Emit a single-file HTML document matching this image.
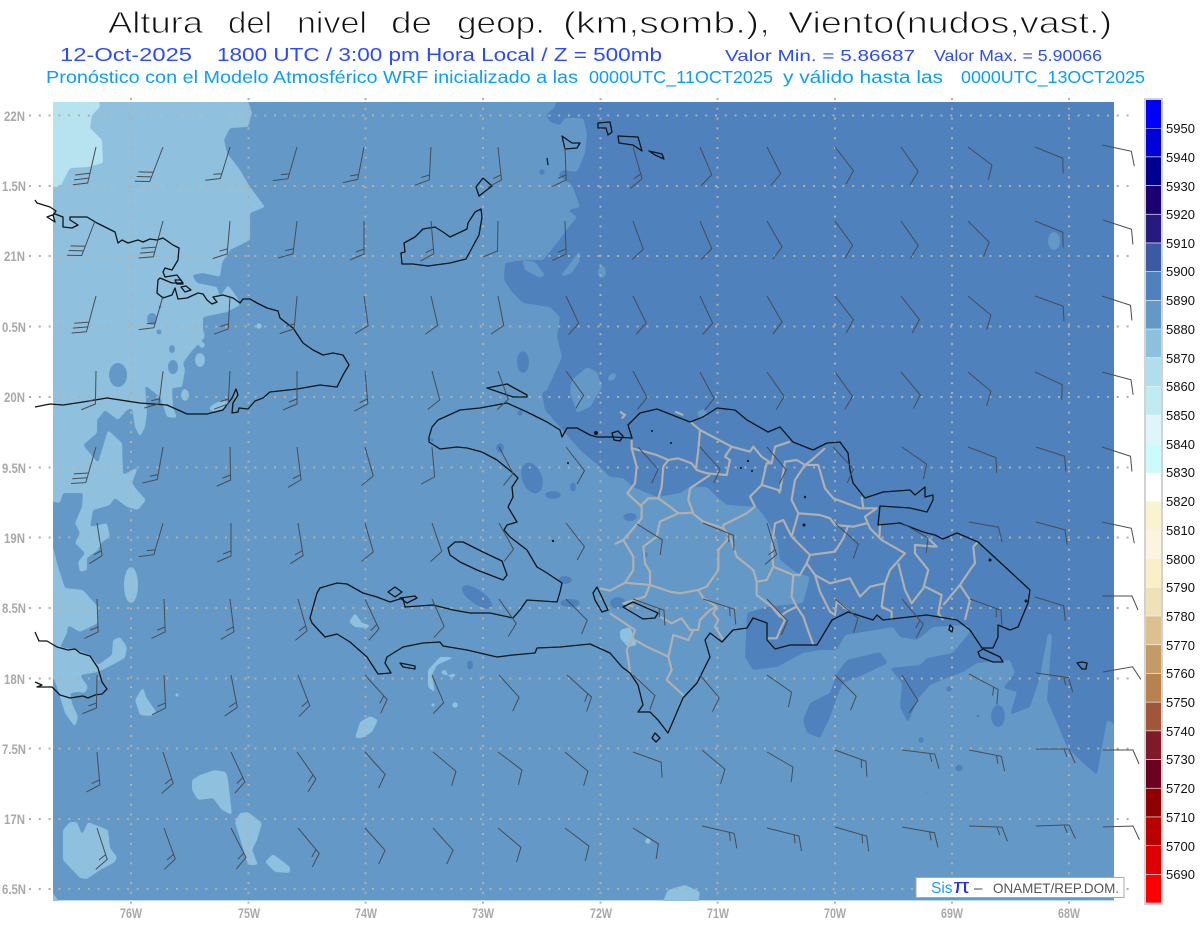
<!DOCTYPE html>
<html><head><meta charset="utf-8"><title>Altura del nivel de geop.</title>
<style>
html,body{margin:0;padding:0;background:#fff}
svg{display:block}
text{font-family:"Liberation Sans",sans-serif;white-space:pre}
.ax{font-size:14px;font-weight:bold;fill:#a9a9a9}
.cb{font-size:13px;fill:#111}
.cl{fill:none;stroke:#101418;stroke-width:1.3;stroke-linejoin:round}
.t1{font-size:31px;fill:#111;paint-order:fill stroke;stroke:#fff;stroke-width:.9px}
</style></head><body>
<svg width="1200" height="927" viewBox="0 0 1200 927" xmlns="http://www.w3.org/2000/svg">
<defs>
<g id="a" fill="none" stroke="#474c52" stroke-width="1"><path d="M0 0V37L-14 42M0 32L-14 37M0 27L-14 32"/></g>
<g id="b" fill="none" stroke="#474c52" stroke-width="1"><path d="M0 0V33L-14 39M0 28L-8 31"/></g>
<g id="c" fill="none" stroke="#474c52" stroke-width="1"><path d="M0 0V30L-14 36"/></g>
<clipPath id="m"><rect x="53" y="102" width="1061" height="799"/></clipPath>
<filter id="r" x="-5%" y="-5%" width="110%" height="110%" color-interpolation-filters="sRGB"><feGaussianBlur stdDeviation="1.2"/><feComponentTransfer><feFuncA type="linear" slope="5" intercept="-2"/></feComponentTransfer></filter>
<filter id="s" x="-5%" y="-5%" width="110%" height="110%"><feGaussianBlur stdDeviation=".35"/></filter>
</defs>
<rect width="1200" height="927" fill="#fff"/>

<g class="t1">
<text x="108" y="33" textLength="95" lengthAdjust="spacingAndGlyphs">Altura</text>
<text x="228" y="33" textLength="44" lengthAdjust="spacingAndGlyphs">del</text>
<text x="297" y="33" textLength="70" lengthAdjust="spacingAndGlyphs">nivel</text>
<text x="391" y="33" textLength="41" lengthAdjust="spacingAndGlyphs">de</text>
<text x="457" y="33" textLength="88" lengthAdjust="spacingAndGlyphs">geop.</text>
<text x="563" y="33" textLength="207" lengthAdjust="spacingAndGlyphs">(km,somb.),</text>
<text x="788" y="33" textLength="324" lengthAdjust="spacingAndGlyphs">Viento(nudos,vast.)</text>
</g>
<g font-size="18" fill="#2c4bff">
<text x="60" y="61" textLength="132" lengthAdjust="spacingAndGlyphs">12-Oct-2025</text>
<text x="217" y="61" textLength="445" lengthAdjust="spacingAndGlyphs">1800 UTC / 3:00 pm Hora Local / Z = 500mb</text>
</g>
<text x="725" y="61" font-size="16" fill="#2c4bff" textLength="190" lengthAdjust="spacingAndGlyphs">Valor Min. = 5.86687</text>
<text x="934" y="61" font-size="16" fill="#2c4bff" textLength="168" lengthAdjust="spacingAndGlyphs">Valor Max. = 5.90066</text>
<g font-size="17.5" fill="#0a9cff">
<text x="46" y="83" textLength="532" lengthAdjust="spacingAndGlyphs">Pronóstico con el Modelo Atmosférico WRF inicializado a las</text>
<text x="589" y="83" textLength="184" lengthAdjust="spacingAndGlyphs">0000UTC_11OCT2025</text>
<text x="783" y="83" textLength="160" lengthAdjust="spacingAndGlyphs">y válido hasta las</text>
<text x="961" y="83" textLength="184" lengthAdjust="spacingAndGlyphs">0000UTC_13OCT2025</text>
</g>

<g clip-path="url(#m)">
<rect x="53" y="102" width="1061" height="799" fill="#6499c7"/>
<rect x="53" y="900" width="1061" height="1" fill="#b8dcf0"/>
<!-- dark -->
<g fill="#4f81bd" filter="url(#r)">
<path d="M557 95L555 107L546 115L550 122L560 125L565 118L583 118L587 133L585 153L577 172L563 170L558 175L572 185L580 207L568 210L577 217L565 232L557 243L543 260L523 260L505 263L504 280L512 292L523 303L550 307L560 317L557 337L562 357L547 390L542 393L545 410L560 427L580 450L600 467L610 477L623 478L633 487L657 497L680 493L690 487L707 487L717 497L727 505L757 507L767 520L777 540L780 560L797 573L810 577L803 603L767 607L747 613L745 657L753 670L777 667L803 653L820 650L837 650L845 635L893 627L900 637L917 640L933 627L967 625L970 632L953 653L927 658L920 665L890 668L902 683L900 707L908 723L917 700L930 685L947 678L963 672L977 663L1010 660L1015 673L1003 688L1017 692L1010 715L1030 707L1040 677L1048 633L1052 635L1047 700L1057 723L1067 747L1083 763L1097 775L1107 720L1113 723L1122 743V95Z"/>
<path d="M880 652L888 663L863 675L843 683L837 697L830 717L820 738L807 733L803 720L810 703L830 693L837 673L847 660Z"/>
<ellipse cx="523" cy="362" rx="6" ry="11"/><circle cx="542" cy="172" r="3"/>
<ellipse cx="477" cy="597" rx="18" ry="7" transform="rotate(35 477 597)"/>
<ellipse cx="470" cy="665" rx="3" ry="5"/>
<ellipse cx="532" cy="478" rx="10" ry="16" transform="rotate(-20 532 478)"/>
<ellipse cx="553" cy="495" rx="8" ry="4"/><ellipse cx="573" cy="487" rx="3" ry="5"/>
<ellipse cx="565" cy="580" rx="7" ry="4"/><ellipse cx="570" cy="603" rx="10" ry="4"/>
<ellipse cx="500" cy="448" rx="4" ry="5"/><circle cx="520" cy="413" r="3"/>
<ellipse cx="630" cy="517" rx="7" ry="4"/><circle cx="645" cy="555" r="3"/>
<ellipse cx="618" cy="603" rx="8" ry="6"/><circle cx="432" cy="440" r="2"/>
<ellipse cx="998" cy="716" rx="7" ry="11"/><circle cx="921" cy="740" r="3"/>
<ellipse cx="959" cy="768" rx="4" ry="3.5"/><circle cx="949" cy="689" r="3"/>
<circle cx="978" cy="716" r="2"/><circle cx="927" cy="793" r="1.5"/>
</g>
<!-- mid on dark -->
<g fill="#6499c7" filter="url(#r)">
<path d="M587 367L597 372L602 387L590 407L577 413L570 393L572 380Z"/>
<path d="M560 277L580 250L580 260L572 273Z"/>
<ellipse cx="602" cy="272" rx="4" ry="6"/>
<ellipse cx="612" cy="377" rx="5" ry="3" transform="rotate(-40 612 377)"/>
<ellipse cx="1054" cy="241" rx="6" ry="9"/>
<path d="M522 260L535 262L545 275L540 278L525 270Z"/>
<path d="M697 412L705 408L708 416L700 420Z"/>
</g>
<!-- light -->
<g fill="#8fc1df" filter="url(#r)">
<path d="M45 95L246 95L252 113L248 127L230 128L224 140L227 153L240 170L250 187L265 207L250 213L250 240L230 250L222 263L220 277L203 273L192 275L197 283L217 287L220 297L228 285L237 297L240 305L227 312L203 317L203 330L205 337L200 342L190 353L183 363L185 370L182 387L172 388L173 407L177 418L167 417L160 397L145 385L147 413L145 427L140 437L135 427L132 408L127 410L118 420L105 410L97 420L97 433L83 445L98 463L108 430L122 443L123 475L138 467L132 483L137 490L146 500L138 510L127 507L115 498L113 500L110 505L93 510L90 527L107 523L110 537L102 542L98 550L87 558L87 570L80 572L78 562L85 553L75 543L80 533L75 523L82 507L83 493L63 493L60 503L45 500Z"/>
<path d="M45 547L53 547L58 567L65 588L83 590L98 607L98 623L80 632L68 625L67 633L60 647L77 650L90 655L98 665L112 655L113 640L120 637L127 647L125 658L112 665L98 672L80 675L88 687L85 693L78 692L70 693L72 703L78 717L75 727L65 713L57 687L53 677L45 677Z"/>
<circle cx="259" cy="326" r="3"/><circle cx="202" cy="345" r="3"/>
<ellipse cx="200" cy="360" rx="5" ry="7"/><circle cx="230" cy="351" r="1.5"/>
<ellipse cx="185" cy="395" rx="4" ry="6"/>
<ellipse cx="219" cy="406" rx="10" ry="4" transform="rotate(-20 219 406)"/>
<ellipse cx="131" cy="585" rx="7" ry="18"/>
<path d="M143 687L146 697L157 713L150 716L140 715L135 700Z"/>
<circle cx="177" cy="695" r="2"/>
<path d="M70 822L77 822L82 835L88 822L108 830L110 848L117 857L115 862L100 870L87 879L80 878L63 860L63 830Z"/>
<path d="M200 775L215 770L226 772L228 780L230 797L232 815L222 810L213 798L198 800L192 790L192 780Z"/>
<path d="M240 813L248 812L262 823L257 840L252 850L258 865L248 865L245 855L235 822Z"/>
<path d="M273 854L290 867L290 873L275 872L265 862Z"/>
<path d="M45 885L53 893L63 908H45Z"/>
<path d="M355 613L362 623L370 625L368 628L355 627L349 622Z"/>
<path d="M457 657L440 657L428 670L428 687L435 693L432 675L437 665L448 660Z"/>
<path d="M448 675L457 673L453 678L440 673L445 669Z"/>
<circle cx="455" cy="705" r="3"/><circle cx="433" cy="705" r="2"/>
<path d="M355 738L360 722L370 716L378 720L372 732L362 738Z"/>
<path d="M660 908L668 890L685 885L700 892L697 908Z"/>
<path d="M620 630L630 627L637 645L628 647L620 638Z"/>
<circle cx="648" cy="841" r="3"/>
</g>
<g fill="#6499c7"><ellipse cx="118" cy="375" rx="9" ry="12"/>
<ellipse cx="152" cy="319" rx="5" ry="6"/><ellipse cx="173" cy="367" rx="5" ry="7"/><ellipse cx="172" cy="349" rx="3" ry="4"/>
<circle cx="159" cy="332" r="2.5"/><circle cx="160" cy="307" r="1.5"/></g>
<g filter="url(#r)"><path d="M45 95L98 95L100 107L92 115L90 128L102 140L103 163L88 167L70 168L60 187L45 187Z" fill="#b7e2ef"/></g>
</g>

<!-- grid -->
<g fill="none" stroke="#b5aea5" stroke-width="2" stroke-dasharray="2 7.8">
<path d="M29 115.5H1135M29 186H1135M29 256H1135M29 326.5H1135M29 397H1135M29 467.5H1135M29 537.5H1135M29 608H1135M29 678.5H1135M29 748.5H1135M29 819H1135M29 889H1135"/>
<path d="M131 98V905M248.5 98V905M365.5 98V905M483 98V905M600.5 98V905M717.5 98V905M835 98V905M952 98V905M1069 98V905"/>
</g>

<!-- provinces -->
<g transform="translate(590 400) scale(.3333)" fill="none" stroke="#b0b0b0" stroke-width="6.5" stroke-linejoin="round" filter="url(#s)">
<path d="M125 120L125 145L140 200L135 250L112 280L155 320L155 355L130 385L100 420L75 432M100 420L130 470L130 510L105 548L60 572L30 565"/>
<path d="M105 548L180 555L240 575L270 580L325 570L340 595L380 620L370 640L385 660L375 680L400 720"/>
<path d="M180 555L165 590L100 610L130 620M210 650L245 670L275 655L300 690L325 690L330 660L360 630L380 620"/>
<path d="M60 640L135 690L125 720L110 750L118 800L120 820"/>
<path d="M135 720L170 740L235 770L245 810L230 840L285 890"/>
<path d="M235 770L250 705L295 720L310 690"/>
<path d="M125 145L165 155L200 165L235 180L265 175L305 190L320 210L350 220L410 225L420 180L405 170L425 140L480 155L490 140L515 170L545 190L555 140L600 125"/>
<path d="M330 90L325 150L318 205"/>
<path d="M300 65L330 90L425 140"/>
<path d="M235 180L220 200L215 260L205 295L175 295L150 320M205 295L240 320L265 340L305 338L340 365L400 385L420 410L385 450L385 510L350 560L325 570"/>
<path d="M360 225L300 265L295 300L310 340"/>
<path d="M400 385L400 375L470 340L495 320L480 290L515 255L530 190L545 190"/>
<path d="M420 410L440 470L490 510L500 545L530 540L550 500L610 525L605 590L620 620L640 650L650 680L670 735"/>
<path d="M265 340L210 365L200 410L160 440L165 490L180 515L180 555"/>
<path d="M500 545L500 585L545 620L570 650L590 635L620 620M545 620L585 660L570 690L560 715L530 715"/>
<path d="M515 255L565 270L570 280"/>
<path d="M570 275L585 185L620 180L645 195L685 195L705 265L730 295L810 325L860 325L825 350L840 385L875 420L945 460L900 510L885 550L875 620L905 635L905 660"/>
<path d="M705 145L665 180L645 195L615 240L605 300L625 340L690 345L720 355L735 375L790 380L830 370"/>
<path d="M625 340L605 410L660 465L650 490L630 525L610 525M605 410L580 360L555 370L545 440L550 500"/>
<path d="M660 465L735 455L760 415L775 375M650 490L675 525L690 575L720 635L735 645L740 605L775 630M675 525L720 550L780 535L810 590L840 560L885 550"/>
<path d="M925 490L945 570L965 610L1000 565L1015 510L975 460L975 435L1040 440L1010 410"/>
<path d="M1005 560L1055 585L1045 640L1060 660M1060 615L1110 555L1140 600L1125 660M1110 555L1140 510L1155 490L1150 440L1165 425M870 375L868 415"/>
<path d="M815 290L820 325"/>
<path d="M90 35L105 45L95 55M255 35L280 45"/>
</g>

<!-- coast -->
<g class="cl" filter="url(#s)">
<path d="M35 200L37 203L50 207L56 211L53 215L55 222L47 217L55 214L63 217L63 227L72 228L78 225L70 220L70 217L87 217L97 223L115 232L118 243L122 240L128 243L138 240L143 242L150 239L157 240L163 238L173 245L179 248L178 260L172 270L165 268L163 272L165 277L177 275L183 283L172 283L160 278L158 280L157 293L163 298L172 295L175 288L178 299L187 298L198 293L203 294L207 300L212 304L217 302L213 297L223 295L233 298L240 303L243 299L250 299L257 303L267 308L278 311L280 318L293 328L303 343L313 350L323 355L333 353L343 355L349 365L343 375L337 387L320 385L297 389L270 392L263 398L255 401L248 409L239 408L238 412L232 413L233 403L238 395L236 389L232 398L223 410L207 414L187 414L167 405L140 403L107 398L83 402L63 405L50 404L35 407"/>
<path d="M181 287L186 286L191 290L185 292Z"/><path d="M175 280L181 280L183 284L177 284Z"/>
<path d="M35 632L39 641L47 641L57 647L68 650L75 649L80 653L90 656L98 668L102 682L107 689L102 694L95 695L88 698L83 696L70 698L60 695L52 687L37 687L42 685L35 682"/>
<path d="M402 264L401 253L405 252L404 243L415 237L423 229L435 227L443 232L450 237L467 229L468 223L475 212L481 209L482 217L479 235L466 259L450 263L428 266L413 264Z"/>
<path d="M476 187L483 178L492 186L479 196Z"/>
<path d="M562 136L572 143L580 143L577 148L565 149Z"/>
<path d="M547 158L548 165"/>
<path d="M598 123L610 122L612 132L608 135L606 128L598 128Z"/>
<path d="M618 136L638 137L642 151L633 145L619 143Z"/>
<path d="M649 151L662 154L664 159L655 155Z"/>
<path d="M448 548L455 542L463 542L483 552L502 561L507 575L503 580L490 575L477 570L460 562L450 555Z"/>
<path d="M487 388L507 384L527 395L527 397L513 397Z"/>
<path d="M429 437L432 427L438 420L460 410L480 408L507 403L527 412L547 422L560 430L562 437L567 428L577 428L590 435L597 437L613 437L632 438L628 425L640 413L657 409L690 422L703 417L717 408L735 410L747 420L768 432L780 427L793 442L813 450L827 443L840 442L848 453L850 470L853 483L865 498L883 492L910 490L915 495L925 487L925 497L933 495L933 500L927 512L910 508L880 506L878 525L900 523L923 532L935 535L943 539L957 533L978 542L1003 565L1030 590L1028 603L1018 627L1010 630L998 625L998 637L993 648L982 648L970 630L957 620L927 615L900 618L883 620L877 615L873 620L848 612L838 617L832 620L817 645L790 645L775 649L767 640L767 623L753 618L747 628L733 630L722 642L710 633L705 640L710 657L697 683L683 698L668 733L658 720L650 712L638 712L643 705L638 685L630 673L622 667L610 653L590 644L560 647L537 648L535 653L513 655L497 657L467 650L443 646L440 642L423 643L403 647L387 657L385 663L391 673L378 674L367 657L350 642L337 634L325 637L312 623L310 618L317 593L320 588L337 583L347 584L363 593L377 597L390 602L403 598L405 607L433 605L453 610L470 613L490 613L513 618L520 610L527 600L557 602L560 592L562 583L547 573L537 567L527 550L510 537L504 530L507 525L517 522L508 507L513 497L512 487L518 478L513 473L497 460L482 452L467 448L457 447L440 449L429 442Z"/>
<path d="M388 592L395 587L402 592L395 597Z"/>
<path d="M400 598L415 596L417 598L407 603Z"/>
<path d="M400 663L415 666L415 669L403 667Z"/>
<path d="M655 733L660 738L656 742L652 738Z"/>
<path d="M978 652L983 649L1000 657L1003 662L993 662L980 657Z"/>
<path d="M950 625L953 628L952 632L949 630Z"/>
<path d="M1077 663L1082 662L1087 663L1086 669L1082 669Z"/>
<path d="M593 593L597 587L608 610L602 612L595 600Z"/>
<path d="M623 607L633 602L658 613L655 618L643 619L633 613Z"/>
<path d="M612 433L618 431L623 436L620 441L614 440Z"/>
</g>
<g fill="#101418"><circle cx="652" cy="431" r="1"/><circle cx="671" cy="443" r="1"/><circle cx="748" cy="461" r="1.2"/><circle cx="741" cy="468" r="1"/><circle cx="752" cy="471" r="1"/><circle cx="805" cy="497" r="1.2"/><circle cx="804" cy="525" r="1.5"/><circle cx="990" cy="560" r="1.5"/><circle cx="1026" cy="601" r="1.5"/><circle cx="553" cy="541" r="1.2"/><circle cx="568" cy="463" r="1"/><circle cx="596" cy="433" r="2"/></g>

<!-- barbs -->
<g>
<use href="#a" transform="translate(96 147)rotate(13)"/><use href="#a" transform="translate(163 147)rotate(21)"/><use href="#b" transform="translate(230 147)rotate(17)"/><use href="#b" transform="translate(297 147)rotate(16)"/><use href="#b" transform="translate(364 147)rotate(11)"/><use href="#b" transform="translate(431 147)rotate(3)"/><use href="#b" transform="translate(498 147)rotate(-6)"/><use href="#b" transform="translate(565 147)rotate(-2)"/><use href="#b" transform="translate(633 147)rotate(-16)"/><use href="#c" transform="translate(700 147)rotate(-23)"/><use href="#c" transform="translate(767 147)rotate(-27)"/><use href="#c" transform="translate(835 147)rotate(-38)"/><use href="#c" transform="translate(901 147)rotate(-35)"/><use href="#c" transform="translate(968 147)rotate(-53)"/><use href="#c" transform="translate(1035 147)rotate(-68)"/><use href="#c" transform="translate(1102 145)rotate(-78)"/>

<use href="#a" transform="translate(95 221)rotate(21)"/><use href="#a" transform="translate(163 221)rotate(15)"/><use href="#b" transform="translate(230 221)rotate(5)"/><use href="#b" transform="translate(297 221)rotate(7)"/><use href="#b" transform="translate(364 221)"/><use href="#b" transform="translate(431 221)rotate(-5)"/><use href="#c" transform="translate(498 221)rotate(1)"/><use href="#b" transform="translate(565 221)rotate(-2)"/><use href="#c" transform="translate(633 221)rotate(-20)"/><use href="#c" transform="translate(700 221)rotate(-23)"/><use href="#c" transform="translate(767 221)rotate(-30)"/><use href="#c" transform="translate(835 221)rotate(-36)"/><use href="#c" transform="translate(901 221)rotate(-35)"/><use href="#c" transform="translate(968 221)rotate(-45)"/><use href="#c" transform="translate(1035 221)rotate(-68)"/><use href="#c" transform="translate(1103 220)rotate(-72)"/>

<use href="#a" transform="translate(96 296)rotate(15)"/><use href="#b" transform="translate(163 296)rotate(16)"/><use href="#b" transform="translate(230 296)rotate(3)"/><use href="#b" transform="translate(297 296)rotate(5)"/><use href="#c" transform="translate(364 296)rotate(-8)"/><use href="#c" transform="translate(431 296)rotate(-13)"/><use href="#c" transform="translate(498 296)rotate(-11)"/><use href="#c" transform="translate(566 296)rotate(-25)"/><use href="#c" transform="translate(633 296)rotate(-26)"/><use href="#c" transform="translate(700 296)rotate(-25)"/><use href="#c" transform="translate(767 296)rotate(-30)"/><use href="#c" transform="translate(835 296)rotate(-38)"/><use href="#c" transform="translate(901 296)rotate(-38)"/><use href="#c" transform="translate(968 296)rotate(-50)"/><use href="#c" transform="translate(1035 296)rotate(-70)"/><use href="#c" transform="translate(1102 296)rotate(-72)"/>

<use href="#b" transform="translate(96 371)rotate(1)"/><use href="#b" transform="translate(163 371)rotate(7)"/><use href="#b" transform="translate(230 371)rotate(3)"/><use href="#b" transform="translate(297 371)"/><use href="#b" transform="translate(365 371)rotate(-5)"/><use href="#c" transform="translate(432 371)rotate(-15)"/><use href="#c" transform="translate(498 371)rotate(-20)"/><use href="#c" transform="translate(566 371)rotate(-36)"/><use href="#c" transform="translate(633 371)rotate(-28)"/><use href="#c" transform="translate(700 372)rotate(-28)"/><use href="#c" transform="translate(767 372)rotate(-35)"/><use href="#c" transform="translate(835 372)rotate(-36)"/><use href="#c" transform="translate(901 372)rotate(-40)"/><use href="#c" transform="translate(968 372)rotate(-50)"/><use href="#c" transform="translate(1035 372)rotate(-65)"/><use href="#c" transform="translate(1102 372)rotate(-75)"/>

<use href="#a" transform="translate(96 447)rotate(16)"/><use href="#b" transform="translate(163 447)rotate(10)"/><use href="#b" transform="translate(230 447)rotate(-1)"/><use href="#b" transform="translate(297 447)rotate(-7)"/><use href="#c" transform="translate(365 447)rotate(-16)"/><use href="#c" transform="translate(432 447)rotate(-5)"/><use href="#c" transform="translate(499 447)rotate(-28)"/><use href="#c" transform="translate(566 447)rotate(-38)"/><use href="#c" transform="translate(638 447)rotate(-42)"/><use href="#c" transform="translate(700 447)rotate(-42)"/><use href="#c" transform="translate(767 447)rotate(-40)"/><use href="#c" transform="translate(833 447)rotate(-43)"/><use href="#c" transform="translate(902 447)rotate(-55)"/><use href="#c" transform="translate(968 447)rotate(-69)"/><use href="#c" transform="translate(1036 447)rotate(-72)"/><use href="#c" transform="translate(1102 447)rotate(-72)"/>

<use href="#b" transform="translate(97 523)rotate(-9)"/><use href="#b" transform="translate(163 523)rotate(16)"/><use href="#b" transform="translate(231 523)"/><use href="#b" transform="translate(298 523)rotate(-9)"/><use href="#c" transform="translate(365 523)rotate(-16)"/><use href="#c" transform="translate(432 523)rotate(-19)"/><use href="#c" transform="translate(499 523)rotate(-29)"/><use href="#c" transform="translate(566 523)rotate(-38)"/><use href="#c" transform="translate(637 524)rotate(-58)"/><use href="#b" transform="translate(703 523)rotate(-68)"/><use href="#b" transform="translate(767 523)rotate(-17)"/><use href="#c" transform="translate(836 524)rotate(-48)"/><use href="#c" transform="translate(902 523)rotate(-60)"/><use href="#c" transform="translate(969 522)rotate(-80)"/><use href="#c" transform="translate(1036 522)rotate(-75)"/><use href="#c" transform="translate(1102 522)rotate(-78)"/>

<use href="#b" transform="translate(97 599)rotate(-2)"/><use href="#b" transform="translate(164 599)rotate(-2)"/><use href="#b" transform="translate(230 599)rotate(-7)"/><use href="#b" transform="translate(298 599)rotate(-16)"/><use href="#b" transform="translate(365 599)rotate(-25)"/><use href="#c" transform="translate(432 599)rotate(-24)"/><use href="#c" transform="translate(499 599)rotate(-35)"/><use href="#c" transform="translate(566 599)rotate(-45)"/><use href="#b" transform="translate(633 599)rotate(-70)"/><use href="#b" transform="translate(703 599)rotate(-72)"/><use href="#c" transform="translate(767 599)rotate(-43)"/><use href="#c" transform="translate(835 599)rotate(-50)"/><use href="#b" transform="translate(902 599)rotate(-40)"/><use href="#b" transform="translate(970 599)rotate(-70)"/><use href="#c" transform="translate(1035 597)rotate(-73)"/><use href="#c" transform="translate(1102 596)rotate(-90)"/>

<use href="#b" transform="translate(97 675)rotate(1)"/><use href="#b" transform="translate(164 675)rotate(-3)"/><use href="#b" transform="translate(231 675)rotate(-11)"/><use href="#b" transform="translate(298 675)rotate(-21)"/><use href="#b" transform="translate(365 675)rotate(-42)"/><use href="#c" transform="translate(432 675)rotate(-23)"/><use href="#c" transform="translate(499 675)rotate(-42)"/><use href="#b" transform="translate(567 675)rotate(-48)"/><use href="#c" transform="translate(633 675)rotate(-47)"/><use href="#c" transform="translate(700 675)rotate(-40)"/><use href="#c" transform="translate(767 675)rotate(-55)"/><use href="#c" transform="translate(835 675)rotate(-45)"/><use href="#c" transform="translate(902 675)rotate(-32)"/><use href="#b" transform="translate(969 674)rotate(-62)"/><use href="#b" transform="translate(1036 673)rotate(-82)"/><use href="#c" transform="translate(1103 672)rotate(-100)"/>

<use href="#b" transform="translate(97 752)rotate(-5)"/><use href="#b" transform="translate(163 752)rotate(-18)"/><use href="#b" transform="translate(231 752)rotate(-25)"/><use href="#b" transform="translate(297 752)rotate(-35)"/><use href="#c" transform="translate(365 752)rotate(-42)"/><use href="#c" transform="translate(433 752)rotate(-50)"/><use href="#c" transform="translate(498 752)rotate(-53)"/><use href="#c" transform="translate(565 752)rotate(-50)"/><use href="#c" transform="translate(633 752)rotate(-70)"/><use href="#c" transform="translate(702 750)rotate(-50)"/><use href="#c" transform="translate(767 752)rotate(-60)"/><use href="#b" transform="translate(835 750)rotate(-70)"/><use href="#b" transform="translate(902 750)rotate(-83)"/><use href="#b" transform="translate(969 750)rotate(-79)"/><use href="#b" transform="translate(1036 749)rotate(-90)"/><use href="#c" transform="translate(1103 750)rotate(-90)"/>

<use href="#b" transform="translate(97 828)rotate(-18)"/><use href="#b" transform="translate(164 828)rotate(-20)"/><use href="#b" transform="translate(231 828)rotate(-27)"/><use href="#b" transform="translate(298 828)rotate(-40)"/><use href="#c" transform="translate(365 828)rotate(-42)"/><use href="#c" transform="translate(433 828)rotate(-42)"/><use href="#c" transform="translate(498 828)rotate(-50)"/><use href="#c" transform="translate(565 828)rotate(-53)"/><use href="#c" transform="translate(633 828)rotate(-58)"/><use href="#b" transform="translate(702 826)rotate(-77)"/><use href="#b" transform="translate(767 828)rotate(-76)"/><use href="#b" transform="translate(835 827)rotate(-74)"/><use href="#b" transform="translate(902 827)rotate(-80)"/><use href="#b" transform="translate(969 826)rotate(-88)"/><use href="#b" transform="translate(1036 826)rotate(-92)"/><use href="#c" transform="translate(1103 827)rotate(-92)"/>
</g>

<!-- axis labels -->
<g class="ax">
<text x="4" y="121" textLength="21" lengthAdjust="spacingAndGlyphs">22N</text>
<text x="2" y="191" textLength="24" lengthAdjust="spacingAndGlyphs">1.5N</text>
<text x="4" y="261" textLength="21" lengthAdjust="spacingAndGlyphs">21N</text>
<text x="2" y="332" textLength="24" lengthAdjust="spacingAndGlyphs">0.5N</text>
<text x="4" y="402" textLength="21" lengthAdjust="spacingAndGlyphs">20N</text>
<text x="2" y="473" textLength="24" lengthAdjust="spacingAndGlyphs">9.5N</text>
<text x="4" y="543" textLength="21" lengthAdjust="spacingAndGlyphs">19N</text>
<text x="2" y="613" textLength="24" lengthAdjust="spacingAndGlyphs">8.5N</text>
<text x="4" y="684" textLength="21" lengthAdjust="spacingAndGlyphs">18N</text>
<text x="2" y="754" textLength="24" lengthAdjust="spacingAndGlyphs">7.5N</text>
<text x="4" y="824" textLength="21" lengthAdjust="spacingAndGlyphs">17N</text>
<text x="2" y="894" textLength="24" lengthAdjust="spacingAndGlyphs">6.5N</text>
<text x="120" y="918" textLength="22" lengthAdjust="spacingAndGlyphs">76W</text>
<text x="238" y="918" textLength="22" lengthAdjust="spacingAndGlyphs">75W</text>
<text x="355" y="918" textLength="22" lengthAdjust="spacingAndGlyphs">74W</text>
<text x="472" y="918" textLength="22" lengthAdjust="spacingAndGlyphs">73W</text>
<text x="590" y="918" textLength="22" lengthAdjust="spacingAndGlyphs">72W</text>
<text x="707" y="918" textLength="22" lengthAdjust="spacingAndGlyphs">71W</text>
<text x="824" y="918" textLength="22" lengthAdjust="spacingAndGlyphs">70W</text>
<text x="941" y="918" textLength="22" lengthAdjust="spacingAndGlyphs">69W</text>
<text x="1058" y="918" textLength="22" lengthAdjust="spacingAndGlyphs">68W</text>
</g>

<!-- colorbar -->
<rect x="1144" y="98" width="19" height="807" fill="#d2d2d2"/>
<rect x="1146" y="100" width="15" height="803" fill="#f2f2f2"/>
<g>
<rect x="1146" y="100" width="15" height="28" fill="#0000ff"/>
<rect x="1146" y="128.5" width="15" height="28" fill="#0000d8"/>
<rect x="1146" y="157.2" width="15" height="28" fill="#000090"/>
<rect x="1146" y="185.9" width="15" height="28" fill="#1a0070"/>
<rect x="1146" y="214.6" width="15" height="28" fill="#261a80"/>
<rect x="1146" y="243.3" width="15" height="28" fill="#3b5aa5"/>
<rect x="1146" y="272" width="15" height="28" fill="#4f81bd"/>
<rect x="1146" y="300.7" width="15" height="28" fill="#6499c7"/>
<rect x="1146" y="329.4" width="15" height="28" fill="#8cc0dc"/>
<rect x="1146" y="358.1" width="15" height="28" fill="#b0deec"/>
<rect x="1146" y="386.8" width="15" height="28" fill="#c0ebf5"/>
<rect x="1146" y="415.5" width="15" height="28" fill="#e0f5fa"/>
<rect x="1146" y="444.2" width="15" height="28.7" fill="#ccfbfc"/>
<rect x="1146" y="472.9" width="15" height="28.7" fill="#ffffff"/>
<rect x="1146" y="501.6" width="15" height="28" fill="#f9f3cf"/>
<rect x="1146" y="530.3" width="15" height="28" fill="#fbf5e0"/>
<rect x="1146" y="559" width="15" height="28" fill="#f9f0c8"/>
<rect x="1146" y="587.7" width="15" height="28" fill="#efe2b8"/>
<rect x="1146" y="616.4" width="15" height="28" fill="#dcc18f"/>
<rect x="1146" y="645.1" width="15" height="28" fill="#c49a66"/>
<rect x="1146" y="673.8" width="15" height="28" fill="#b8824f"/>
<rect x="1146" y="702.5" width="15" height="28" fill="#a0563b"/>
<rect x="1146" y="731.2" width="15" height="28" fill="#7f1a28"/>
<rect x="1146" y="759.9" width="15" height="28" fill="#6c0020"/>
<rect x="1146" y="788.6" width="15" height="28" fill="#8f0000"/>
<rect x="1146" y="817.3" width="15" height="28" fill="#bb0000"/>
<rect x="1146" y="846" width="15" height="28" fill="#dc0000"/>
<rect x="1146" y="874.7" width="15" height="28" fill="#ff0000"/>
</g>
<g class="cb">
<text x="1166" y="133">5950</text><text x="1166" y="162">5940</text><text x="1166" y="191">5930</text><text x="1166" y="219">5920</text><text x="1166" y="248">5910</text><text x="1166" y="276">5900</text><text x="1166" y="305">5890</text><text x="1166" y="334">5880</text><text x="1166" y="363">5870</text><text x="1166" y="391">5860</text><text x="1166" y="420">5850</text><text x="1166" y="449">5840</text><text x="1166" y="477">5830</text><text x="1166" y="506">5820</text><text x="1166" y="535">5810</text><text x="1166" y="564">5800</text><text x="1166" y="592">5790</text><text x="1166" y="621">5780</text><text x="1166" y="650">5770</text><text x="1166" y="678">5760</text><text x="1166" y="707">5750</text><text x="1166" y="736">5740</text><text x="1166" y="764">5730</text><text x="1166" y="793">5720</text><text x="1166" y="822">5710</text><text x="1166" y="851">5700</text><text x="1166" y="879">5690</text>
</g>

<!-- label box -->
<rect x="916" y="877.5" width="208" height="20" fill="#fff" stroke="#a8a8a8"/>
<text x="931" y="893" font-size="15.5" fill="#1a9cff">Sis</text>
<text x="953" y="893" font-size="20" fill="#2233ee" textLength="17" lengthAdjust="spacingAndGlyphs">π</text>
<text x="974" y="893" font-size="15" fill="#444">–</text>
<text x="993" y="893" font-size="14" fill="#555" textLength="126" lengthAdjust="spacingAndGlyphs">ONAMET/REP.DOM.</text>
</svg>
</body></html>
